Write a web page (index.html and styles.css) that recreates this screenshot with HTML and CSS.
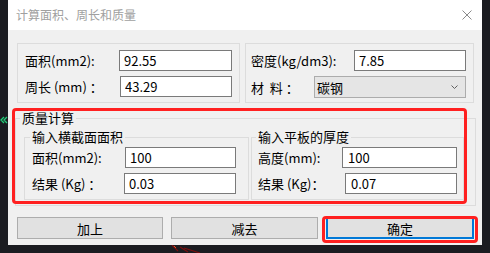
FILE: index.html
```html
<!DOCTYPE html>
<html lang="zh-CN">

<head>
    <meta charset="UTF-8">
    <meta name="viewport" content="width=device-width, initial-scale=1.0">
    <title>计算面积、周长和质量</title>
    <link rel="stylesheet" href="styles.css">
</head>

<body>
    <!-- Marcas da janela de trás -->
    <svg class="bg-mark" width="8" height="8" viewBox="0 0 8 8">
        <path d="M4 1 L1 4 L4 7 M7 1 L4 4 L7 7" fill="none" stroke="#22d07a" stroke-width="1.3" />
    </svg>
    <svg class="bg-scratch" width="40" height="8" viewBox="0 0 40 8">
        <path d="M2 0 L8 6 M10 2 L18 7 M14 3 L30 8" fill="none" stroke="#7a1010" stroke-width="1.2" />
        <path d="M4 1 L6 3" stroke="#e05020" stroke-width="1" />
    </svg>

    <div class="dialog">
        <div class="titlebar">
            <span class="title">计算面积、周长和质量</span>
            <svg class="close" width="10" height="10" viewBox="0 0 10 10">
                <path d="M0.5 0.5 L9.5 9.5 M9.5 0.5 L0.5 9.5" stroke="#8a8a8a" stroke-width="1" />
            </svg>
        </div>

        <div class="content">
            <!-- Área e perímetro / densidade e material -->
            <div class="top-row">
                <div class="panel panel-left">
                    <div class="row">
                        <span class="label">面积(mm2):</span>
                        <input class="field" style="width: 113px" value="92.55">
                    </div>
                    <div class="row">
                        <span class="label">周长 (mm) ：</span>
                        <input class="field" style="width: 112px" value="43.29">
                    </div>
                </div>
                <div class="panel panel-right">
                    <div class="row">
                        <span class="label">密度(kg/dm3):</span>
                        <input class="field" style="width: 112px" value="7.85">
                    </div>
                    <div class="row row-tall">
                        <span class="label">材  料 ：</span>
                        <div class="combo">
                            <span>碳钢</span>
                            <svg width="7" height="4" viewBox="0 0 7 4">
                                <path d="M0.5 0.5 L3.5 3.5 L6.5 0.5" fill="none" stroke="#606060" stroke-width="1" />
                            </svg>
                        </div>
                    </div>
                </div>
            </div>

            <!-- Cálculo de massa -->
            <fieldset class="mass">
                <legend class="legend-mass">质量计算</legend>
                <div class="mass-row">
                    <fieldset class="sub sub-left">
                        <legend>输入横截面面积</legend>
                        <div class="row">
                            <span class="label">面积(mm2):</span>
                            <input class="field" style="width: 111px" value="100">
                        </div>
                        <div class="row">
                            <span class="label">结果 (Kg) ：</span>
                            <input class="field" style="width: 112px" value="0.03">
                        </div>
                    </fieldset>
                    <fieldset class="sub sub-right">
                        <legend>输入平板的厚度</legend>
                        <div class="row">
                            <span class="label">高度(mm):</span>
                            <input class="field field-wide" style="width: 115px" value="100">
                        </div>
                        <div class="row">
                            <span class="label">结果 (Kg)：</span>
                            <input class="field field-wide" style="width: 112px" value="0.07">
                        </div>
                    </fieldset>
                </div>
            </fieldset>

            <!-- Botões -->
            <div class="buttons">
                <button class="btn btn-add">加上</button>
                <button class="btn btn-sub">减去</button>
                <button class="btn btn-ok">确定</button>
            </div>
        </div>
    </div>

    <!-- Destaques vermelhos -->
    <div class="mark mark-mass"></div>
    <div class="mark mark-ok"></div>
</body>

</html>
```

FILE: styles.css
```css
/* Reset */
* {
    margin: 0;
    padding: 0;
    box-sizing: border-box;
}

body {
    position: relative;
    width: 490px;
    height: 253px;
    overflow: hidden;
    background: #1b1c21;
    font-family: "Noto Sans CJK SC", "Noto Sans", sans-serif;
    font-size: 13px;
    color: #000;
}

/* Janela */
.dialog {
    margin-left: 8px;
    width: 474px;
    height: 245px;
    background: #f0f0f0;
    display: flex;
    flex-direction: column;
}

.titlebar {
    height: 30px;
    background: #fff;
    display: flex;
    align-items: center;
    justify-content: space-between;
    padding: 0 10px 0 8px;
}

.title {
    font-size: 12px;
    color: #a0a0a0;
    line-height: 1;
}

.close {
    display: block;
}

.content {
    padding: 13px 8px 0 9px;
    display: flex;
    flex-direction: column;
}

/* Linha de cima */
.top-row {
    display: flex;
    gap: 5px;
}

.panel {
    height: 60px;
    border: 1px solid #dcdcdc;
    padding: 6px 7px 0 7px;
    display: flex;
    flex-direction: column;
    gap: 5px;
}

.panel-left {
    width: 223px;
}

.panel-right {
    width: 229px;
    padding-left: 5px;
}

.row {
    display: flex;
    align-items: center;
    justify-content: space-between;
    height: 21px;
}

.row-tall {
    height: 22px;
}

.label {
    white-space: pre;
    line-height: 1;
}

.field {
    height: 21px;
    border: 1px solid #7a7a7a;
    background: #fff;
    padding: 0 4px;
    font: inherit;
    color: #000;
    outline: none;
}

.field-wide {
    padding-left: 5px;
}

.combo {
    width: 152px;
    height: 22px;
    border: 1px solid #acacac;
    background: #e5e5e5;
    display: flex;
    align-items: center;
    justify-content: space-between;
    padding: 0 7px 0 2px;
}

/* Grupos */
fieldset {
    min-width: 0;
    border: 1px solid #dcdcdc;
}

legend {
    padding: 0 2px;
    line-height: 18px;
    margin-left: -2px;
}

.mass {
    margin: 6px -2px 0;
    padding: 1px 11px 5px 8px;
}

.legend-mass {
    margin-left: -4px;
}

.mass-row {
    display: flex;
    gap: 2px;
}

.sub {
    padding: 1px 12px 5px 7px;
    display: flex;
    flex-direction: column;
    gap: 5px;
}

.sub-left {
    width: 225px;
}

.sub-right {
    width: 213px;
    padding-left: 6px;
    padding-right: 6px;
}

/* Botões */
.buttons {
    margin-top: 11px;
    display: flex;
    justify-content: space-between;
}

.btn {
    height: 22px;
    background: #e1e1e1;
    border: 1px solid #adadad;
    font: inherit;
    color: #000;
}

.btn-add {
    width: 146px;
}

.btn-sub {
    width: 147px;
}

.btn-ok {
    width: 148px;
    border: 2px solid #0078d7;
}

/* Destaques */
.mark {
    position: absolute;
    border: 3px solid #ff2020;
    border-radius: 4px;
}

.mark-mass {
    left: 12px;
    top: 108px;
    width: 455px;
    height: 96px;
}

.mark-ok {
    left: 322px;
    top: 216px;
    width: 156px;
    height: 27px;
}

.bg-mark {
    position: absolute;
    left: 0;
    top: 116px;
}

.bg-scratch {
    position: absolute;
    left: 170px;
    top: 245px;
}
```
